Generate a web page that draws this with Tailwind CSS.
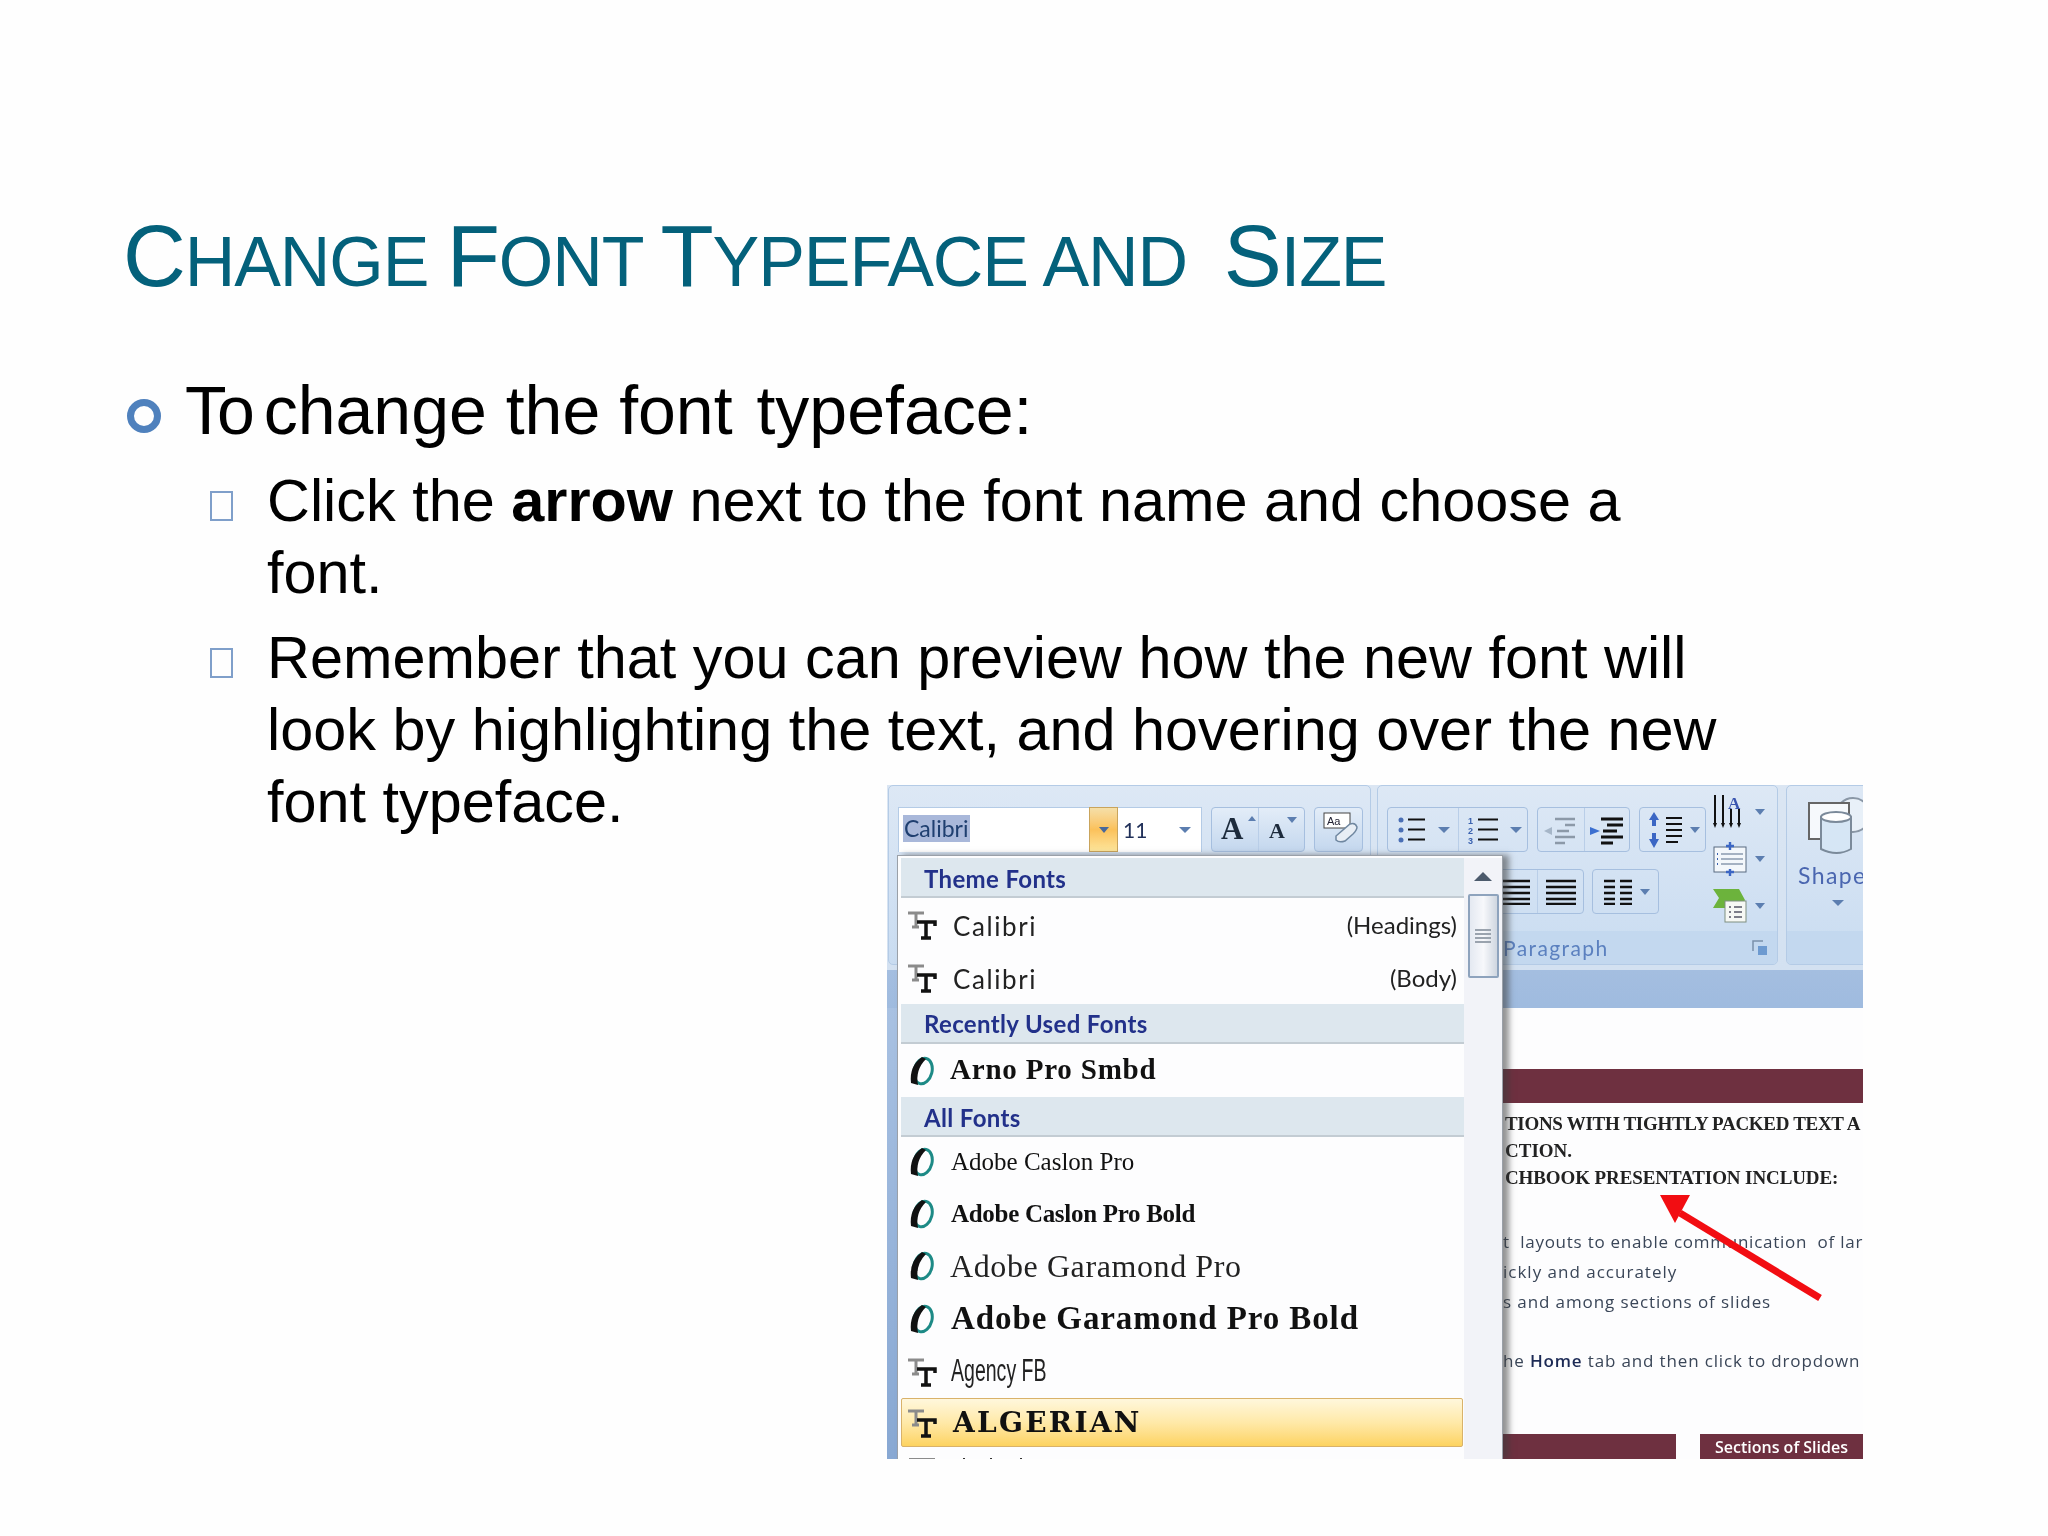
<!DOCTYPE html>
<html lang="en">
  <head>
    <meta charset="UTF-8" />
    <title>Change Font Typeface and Size</title>
    <script src="https://cdn.jsdelivr.net/npm/@tailwindcss/browser@4"></script>
  </head>
  <body class="bg-[#fefefe] font-['Liberation_Sans',Arial,sans-serif]">
    <div class="relative w-[2048px] h-[1536px] overflow-hidden">
      <!-- slide text -->
      <h1 class="absolute left-[123px] top-[206px] whitespace-pre text-[70px] leading-[100px] tracking-[-1.07px] text-[#04617b]"><span class="text-[87px]">C</span>HANGE <span class="text-[87px]">F</span>ONT <span class="text-[87px]">T</span>YPEFACE AND  <span class="text-[87px]">S</span>IZE</h1>

      <div class="absolute left-[127px] top-[372px] w-[1620px] text-black">
        <div class="flex items-start h-[76px]">
          <span class="mt-[27px] w-[34px] h-[34px] rounded-full border-[7px] border-[#4f81bd] shrink-0"></span>
          <p class="ml-[24px] text-[68px] leading-[76px] whitespace-pre"><span class="tracking-[-2px]">To</span><span class="ml-[-8px]"> change the font </span><span class="ml-[5px]">typeface:</span></p>
        </div>
        <div class="flex items-start mt-[17px] ml-[83px]">
          <span class="mt-[26px] w-[23px] h-[30px] border-2 border-[#7f9fca] shrink-0"></span>
          <p class="ml-[34px] text-[59.4px] leading-[72px] w-[1480px]">Click the <b>arrow</b> next to the font name and choose a<br />font.</p>
        </div>
        <div class="flex items-start mt-[13px] ml-[83px]">
          <span class="mt-[26px] w-[23px] h-[30px] border-2 border-[#7f9fca] shrink-0"></span>
          <p class="ml-[34px] text-[59.4px] leading-[72px] w-[1480px]">Remember that you can preview how the new font will<br />look by highlighting the text, and hovering over the new<br />font typeface.</p>
        </div>
      </div>

      <!-- word screenshot -->
      <div class="absolute left-[887px] top-[785px] w-[976px] h-[674px] overflow-hidden bg-white blur-[0.5px] font-['Open_Sans',sans-serif]">
        <!-- ribbon -->
        <div class="h-[185px] bg-gradient-to-b from-[#dbe6f3] to-[#d3e1f1] flex">
          <!-- font group -->
          <div class="w-[483px] h-[180px] ml-[1px] shrink-0 border border-[#b4cbe6] rounded-[5px] pt-[21px] pl-[9px] bg-gradient-to-b from-[#dde8f5] to-[#c9dcf1]">
            <div class="flex items-start">
              <div class="w-[191px] h-[45px] bg-white border-t border-l border-[#b4cbe6] pl-[4px] pt-[7px]">
                <span class="inline-block bg-[#a9b8da] text-[#1f3f70] text-[23px] leading-[27px] px-[1px] font-['Lato',sans-serif]">Calibri</span>
              </div>
              <div class="w-[29px] h-[45px] border border-[#c9a45c] bg-gradient-to-b from-[#f5dfa8] via-[#fbc15a] to-[#fde59a] flex items-center justify-center">
                <span class="border-x-[5px] border-t-[6px] border-x-transparent border-t-[#49689a]"></span>
              </div>
              <div class="w-[84px] h-[45px] bg-white border-t border-r border-[#b4cbe6] pl-[5px] pr-[10px] flex items-center justify-between">
                <span class="text-[21px] text-[#1f2f58] font-['Lato',sans-serif]">11</span>
                <span class="border-x-[6px] border-t-[6px] border-x-transparent border-t-[#5c7eb0]"></span>
              </div>
              <div class="ml-[9px] w-[94px] h-[45px] border border-[#a6bfdf] rounded-[4px] bg-gradient-to-b from-[#e3edf8] to-[#c4d7ee] flex font-['Liberation_Serif',serif] font-bold text-[#1d2b3c]">
                <div class="w-[47px] border-r border-[#b9cee8] relative pl-[9px]">
                  <span class="text-[31px] leading-[42px]">A</span>
                  <span class="absolute right-[2px] top-[8px] border-x-[4px] border-b-[5px] border-x-transparent border-b-[#5c7eb0]"></span>
                </div>
                <div class="flex-1 relative pl-[10px] pt-[6px]">
                  <span class="text-[22px] leading-[34px]">A</span>
                  <span class="absolute right-[7px] top-[9px] border-x-[5px] border-t-[6px] border-x-transparent border-t-[#5c7eb0]"></span>
                </div>
              </div>
              <div class="ml-[9px] w-[49px] h-[45px] border border-[#a6bfdf] rounded-[4px] bg-gradient-to-b from-[#e3edf8] to-[#c4d7ee]">
                <svg width="47" height="43" viewBox="0 0 47 43">
                  <rect x="9" y="5" width="26" height="15" fill="#fff" stroke="#444" />
                  <text x="12" y="17" font-size="11" font-family="Liberation Sans" fill="#223">Aa</text>
                  <path d="M21 28 L35 16 Q40 14 42 19 Q42 22 38 26 L30 33 Q24 35 21 32 Z" fill="#e8eef5" stroke="#6f87a0" stroke-width="1.5" />
                </svg>
              </div>
            </div>
          </div>

          <!-- paragraph group -->
          <div class="ml-[6px] w-[401px] h-[180px] shrink-0 border border-[#b4cbe6] rounded-[5px] bg-gradient-to-b from-[#dde8f5] to-[#c9dcf1] flex flex-col">
            <div class="flex-1 flex pl-[9px]">
              <div class="w-[320px] shrink-0">
                <div class="flex mt-[21px] gap-[9px]">
                  <div class="w-[141px] h-[45px] border border-[#a6bfdf] rounded-[4px] flex">
                    <div class="w-[71px] border-r border-[#b9cee8] flex items-center pl-[10px] gap-[12px]">
                      <svg width="28" height="30" viewBox="0 0 28 30">
                        <circle cx="3" cy="5" r="2.5" fill="#4a6fb5" /><circle cx="3" cy="15" r="2.5" fill="#4a6fb5" /><circle cx="3" cy="25" r="2.5" fill="#4a6fb5" />
                        <path d="M10 4.5H27M10 14.5H27M10 24.5H27" stroke="#111" stroke-width="2" />
                      </svg>
                      <span class="border-x-[6px] border-t-[6px] border-x-transparent border-t-[#5c7eb0]"></span>
                    </div>
                    <div class="flex-1 flex items-center pl-[9px] gap-[12px]">
                      <svg width="30" height="30" viewBox="0 0 30 30">
                        <text x="0" y="9" font-size="9" font-weight="700" font-family="Liberation Sans" fill="#3a62b0">1</text>
                        <text x="0" y="19" font-size="9" font-weight="700" font-family="Liberation Sans" fill="#3a62b0">2</text>
                        <text x="0" y="29" font-size="9" font-weight="700" font-family="Liberation Sans" fill="#3a62b0">3</text>
                        <path d="M10 4.5H30M10 14.5H30M10 24.5H30" stroke="#111" stroke-width="2" />
                      </svg>
                      <span class="border-x-[6px] border-t-[6px] border-x-transparent border-t-[#5c7eb0]"></span>
                    </div>
                  </div>
                  <div class="w-[93px] h-[45px] border border-[#a6bfdf] rounded-[4px] flex">
                    <div class="w-[47px] border-r border-[#b9cee8] flex items-center justify-center">
                      <svg width="36" height="34" viewBox="0 0 36 34">
                        <path d="M12 6H32M22 12H32M14 18H26M12 24H32M12 30H22" stroke="#8c99a8" stroke-width="2.5" />
                        <path d="M9 14 L1 18 L9 22 Z" fill="#a6b6c8" />
                      </svg>
                    </div>
                    <div class="flex-1 flex items-center justify-center">
                      <svg width="36" height="34" viewBox="0 0 36 34">
                        <path d="M12 6H34M18 12H34M14 18H28M12 24H34M12 30H24" stroke="#111" stroke-width="3" />
                        <path d="M1 14 L11 18 L1 22 Z" fill="#3b6fd0" />
                      </svg>
                    </div>
                  </div>
                  <div class="w-[67px] h-[45px] border border-[#a6bfdf] rounded-[4px] flex items-center pl-[8px] gap-[4px]">
                    <svg width="38" height="36" viewBox="0 0 38 36">
                      <path d="M6 0L11 8H8V14H4V8H1ZM6 36L11 27H8V21H4V27H1Z" fill="#3b66c4" />
                      <path d="M18 6H34M18 12H34M18 18H34M18 24H34M18 30H30" stroke="#111" stroke-width="2" />
                    </svg>
                    <span class="border-x-[5px] border-t-[6px] border-x-transparent border-t-[#5c7eb0]"></span>
                  </div>
                </div>
                <div class="flex justify-end mt-[17px] gap-[8px]">
                  <div class="w-[125px] h-[45px] border border-[#a6bfdf] rounded-[4px] flex justify-end">
                    <div class="w-[45px] border-r border-[#b9cee8] flex items-center justify-center">
                      <svg width="32" height="26" viewBox="0 0 32 26"><path d="M1 2H31M1 8H31M1 14H31M1 20H31M1 25H31" stroke="#111" stroke-width="2.4" /></svg>
                    </div>
                    <div class="w-[45px] flex items-center justify-center">
                      <svg width="32" height="26" viewBox="0 0 32 26"><path d="M1 2H31M1 8H31M1 14H31M1 20H31M1 25H31" stroke="#111" stroke-width="2.4" /></svg>
                    </div>
                  </div>
                  <div class="w-[67px] h-[45px] border border-[#a6bfdf] rounded-[4px] flex items-center pl-[10px] gap-[7px] mr-[48px]">
                    <svg width="30" height="26" viewBox="0 0 30 26"><path d="M1 2H12M1 8H12M1 14H12M1 20H12M1 25H12M17 2H29M17 8H29M17 14H29M17 20H29M17 25H29" stroke="#111" stroke-width="2.4" /></svg>
                    <span class="border-x-[5px] border-t-[6px] border-x-transparent border-t-[#5c7eb0]"></span>
                  </div>
                </div>
              </div>
              <div class="flex flex-col pt-[8px] gap-[11px] ml-[6px]">
                <div class="flex items-center gap-[8px] h-[36px]">
                  <svg width="34" height="34" viewBox="0 0 34 34">
                    <path d="M2 0V30M10 0V30M18 14V30M26 14V30" stroke="#111" stroke-width="2" />
                    <path d="M0 28H4L2 33ZM8 28H12L10 33ZM16 28H20L18 33ZM24 28H28L26 33Z" fill="#111" />
                    <text x="15" y="14" font-size="17" font-weight="700" font-family="Liberation Serif" fill="#3a55b0">A</text>
                  </svg>
                  <span class="border-x-[5px] border-t-[6px] border-x-transparent border-t-[#5c7eb0]"></span>
                </div>
                <div class="flex items-center gap-[8px] h-[36px]">
                  <svg width="34" height="34" viewBox="0 0 34 34">
                    <rect x="1" y="5" width="32" height="25" fill="#f3f7fb" stroke="#596a80" />
                    <path d="M4 12H5M4 17H5M4 22H5" stroke="#3a62b0" stroke-width="2" />
                    <path d="M8 12H30M8 17H30M8 22H30" stroke="#8a9bb0" stroke-width="1.5" />
                    <path d="M17 0V8M13 4H21M17 27V34M13 30H21" stroke="#3b66c4" stroke-width="2.4" />
                  </svg>
                  <span class="border-x-[5px] border-t-[6px] border-x-transparent border-t-[#5c7eb0]"></span>
                </div>
                <div class="flex items-center gap-[8px] h-[36px]">
                  <svg width="34" height="36" viewBox="0 0 34 36">
                    <path d="M0 1H26L32 12L28 20H0L6 10Z" fill="#6cb33c" />
                    <rect x="12" y="13" width="21" height="21" fill="#f6f8f4" stroke="#7f8f80" />
                    <path d="M16 19H18M16 24H18M16 29H18M21 19H29M21 24H29M21 29H29" stroke="#556" stroke-width="1.5" />
                  </svg>
                  <span class="border-x-[5px] border-t-[6px] border-x-transparent border-t-[#5c7eb0]"></span>
                </div>
              </div>
            </div>
            <div class="h-[33px] bg-[#c3d8ef] flex items-center justify-between pl-[125px] pr-[9px] rounded-b-[4px]">
              <span class="text-[21px] text-[#5b80bf] font-['Lato',sans-serif] tracking-[1.4px]">Paragraph</span>
              <svg width="16" height="16" viewBox="0 0 16 16"><path d="M1 11V1H11" fill="none" stroke="#7b90aa" stroke-width="1.5" /><rect x="6" y="6" width="9" height="9" fill="#6d9ad0" /></svg>
            </div>
          </div>

          <!-- shapes group -->
          <div class="ml-[8px] w-[100px] h-[180px] shrink-0 border border-[#b4cbe6] rounded-[5px] bg-gradient-to-b from-[#dde8f5] to-[#c9dcf1] flex flex-col">
            <div class="flex-1 flex flex-col pl-[11px] pt-[11px]">
              <svg class="ml-[9px]" width="62" height="60" viewBox="0 0 62 60">
                <circle cx="46" cy="18" r="17" fill="#e8f0f8" stroke="#8a97a6" stroke-width="2" />
                <rect x="2" y="6" width="40" height="36" fill="#f6f9fc" stroke="#666" stroke-width="2" />
                <path d="M14 20 Q32 12 44 20 V52 Q30 60 14 52Z" fill="#d6e6f5" stroke="#7b8a9a" stroke-width="2" />
                <ellipse cx="29" cy="20" rx="15" ry="5" fill="#fff" stroke="#7b8a9a" stroke-width="2" />
              </svg>
              <span class="mt-[3px] text-[23px] leading-[30px] tracking-[1.4px] text-[#4a66b0] font-['Lato',sans-serif] whitespace-nowrap">Shapes</span>
              <span class="ml-[34px] mt-[10px] w-0 border-x-[6px] border-t-[6px] border-x-transparent border-t-[#5c7eb0]"></span>
            </div>
            <div class="h-[33px] bg-[#c3d8ef] rounded-b-[4px]"></div>
          </div>
        </div>
        <div class="h-[38px] bg-gradient-to-b from-[#a4bee0] to-[#9fbbdf]"></div>

        <!-- document behind the menu -->
        <div class="flex h-[451px]">
          <div class="w-[10px] bg-gradient-to-b from-[#a8c1e2] to-[#88a8d3]"></div>
          <div class="ml-[606px] flex-1 overflow-hidden bg-[#fdfdfe] text-[#222]">
            <div class="mt-[61px] h-[34px] bg-[#6e3040]"></div>
            <p class="mt-[8px] pl-[2px] h-[26px] leading-[26px] text-[19px] font-bold whitespace-nowrap tracking-[-0.3px] font-['Liberation_Serif',serif]">TIONS WITH TIGHTLY PACKED TEXT A</p>
            <p class="h-[27px] leading-[27px] pl-[2px] text-[19px] font-bold whitespace-nowrap font-['Liberation_Serif',serif]">CTION.</p>
            <p class="h-[28px] leading-[28px] pl-[2px] text-[19px] font-bold whitespace-nowrap tracking-[-0.1px] font-['Liberation_Serif',serif]">CHBOOK PRESENTATION INCLUDE:</p>
            <p class="mt-[34px] h-[31px] leading-[31px] text-[17px] whitespace-nowrap tracking-[0.75px] text-[#3a4658]">t&nbsp; layouts to enable communication&nbsp; of lar</p>
            <p class="h-[30px] leading-[30px] text-[17px] whitespace-nowrap tracking-[1px] text-[#3a4658]">ickly and accurately</p>
            <p class="h-[30px] leading-[30px] text-[17px] whitespace-nowrap tracking-[0.9px] text-[#3a4658]">s and among sections of slides</p>
            <p class="mt-[29px] h-[30px] leading-[30px] text-[17px] whitespace-nowrap tracking-[0.85px] text-[#3a4658]">he <span class="font-semibold text-[#1c2a55]">Home</span> tab and then click to dropdown</p>
            <div class="mt-[58px] h-[27px] flex gap-[24px]">
              <div class="w-[173px] bg-[#6e3040]"></div>
              <div class="flex-1 bg-[#6e3040] text-white text-[16px] font-semibold leading-[27px] text-center whitespace-nowrap">Sections of Slides</div>
            </div>
          </div>
        </div>

        <!-- annotation arrow -->
        <svg class="absolute left-[760px] top-[398px]" width="190" height="130" viewBox="0 0 190 130">
          <path d="M173 115 L33 30" stroke="#f20d12" stroke-width="7" />
          <path d="M13 12 L43 12 L28 40 Z" fill="#f20d12" />
        </svg>

        <!-- font dropdown -->
        <div class="absolute left-[10px] top-[70px] w-[606px] h-[604px] bg-[#fdfdfe] border border-[#9aa0a8] border-b-0 shadow-[6px_0_6px_rgba(60,60,60,0.55)] flex pt-[2px] overflow-hidden">
          <div class="w-[566px] pl-[3px] font-['Lato',sans-serif]">
            <div class="h-[40px] bg-[#dde7ee] border-b-2 border-[#c3ccd3] pl-[23px] text-[24px] font-bold leading-[41px] tracking-[0.35px] text-[#22318a]">Theme Fonts</div>
            <div class="h-[53px] flex items-center pl-[6px] text-[26px] text-[#222]">
              <svg width="30" height="30" viewBox="0 0 30 30"><path d="M1 3H17M9 3V17M5 17H12" fill="none" stroke="#8b8b8b" stroke-width="3" /><path d="M10 12H28V16M19 12V28M14 28H24" fill="none" stroke="#111" stroke-width="3.5" /></svg>
              <span class="ml-[16px] mt-[3px] tracking-[1.6px]">Calibri</span>
              <span class="ml-auto mr-[7px] text-[24px]">(Headings)</span>
            </div>
            <div class="h-[53px] flex items-center pl-[6px] text-[26px] text-[#222]">
              <svg width="30" height="30" viewBox="0 0 30 30"><path d="M1 3H17M9 3V17M5 17H12" fill="none" stroke="#8b8b8b" stroke-width="3" /><path d="M10 12H28V16M19 12V28M14 28H24" fill="none" stroke="#111" stroke-width="3.5" /></svg>
              <span class="ml-[16px] mt-[3px] tracking-[1.6px]">Calibri</span>
              <span class="ml-auto mr-[7px] text-[24px]">(Body)</span>
            </div>
            <div class="h-[40px] bg-[#dde7ee] border-b-2 border-[#c3ccd3] pl-[23px] text-[24px] font-bold leading-[40px] tracking-[0.35px] text-[#22318a]">Recently Used Fonts</div>
            <div class="h-[53px] flex items-center pl-[6px] font-['Liberation_Serif',serif] font-bold text-[29px] text-[#111]">
              <svg width="30" height="30" viewBox="0 0 30 30"><ellipse cx="16" cy="15" rx="9" ry="13" transform="rotate(14 16 15)" fill="none" stroke="#1d8a86" stroke-width="3" /><path d="M15 1 Q2 10 4 27 L11 29 Q8 14 19 3Z" fill="#111" /></svg>
              <span class="ml-[13px] mb-[2px] tracking-[0.8px]">Arno Pro Smbd</span>
            </div>
            <div class="h-[40px] bg-[#dde7ee] border-b-2 border-[#c3ccd3] pl-[23px] text-[24px] font-bold leading-[41px] tracking-[0.35px] text-[#22318a]">All Fonts</div>
            <div class="h-[50px] flex items-center pl-[6px] font-['Liberation_Serif',serif] text-[25px] text-[#111]">
              <svg width="30" height="30" viewBox="0 0 30 30"><ellipse cx="16" cy="15" rx="9" ry="13" transform="rotate(14 16 15)" fill="none" stroke="#1d8a86" stroke-width="3" /><path d="M15 1 Q2 10 4 27 L11 29 Q8 14 19 3Z" fill="#111" /></svg>
              <span class="ml-[14px]">Adobe Caslon Pro</span>
            </div>
            <div class="h-[53px] flex items-center pl-[6px] font-['Liberation_Serif',serif] font-bold text-[25px] text-[#111]">
              <svg width="30" height="30" viewBox="0 0 30 30"><ellipse cx="16" cy="15" rx="9" ry="13" transform="rotate(14 16 15)" fill="none" stroke="#1d8a86" stroke-width="3" /><path d="M15 1 Q2 10 4 27 L11 29 Q8 14 19 3Z" fill="#111" /></svg>
              <span class="ml-[14px] tracking-[-0.3px]">Adobe Caslon Pro Bold</span>
            </div>
            <div class="h-[52px] flex items-center pl-[6px] font-['Liberation_Serif',serif] text-[32px] text-[#222]">
              <svg width="30" height="30" viewBox="0 0 30 30"><ellipse cx="16" cy="15" rx="9" ry="13" transform="rotate(14 16 15)" fill="none" stroke="#1d8a86" stroke-width="3" /><path d="M15 1 Q2 10 4 27 L11 29 Q8 14 19 3Z" fill="#111" /></svg>
              <span class="ml-[13px] tracking-[0.6px]">Adobe Garamond Pro</span>
            </div>
            <div class="h-[53px] flex items-center pl-[6px] font-['Liberation_Serif',serif] font-bold text-[33px] text-[#111]">
              <svg width="30" height="30" viewBox="0 0 30 30"><ellipse cx="16" cy="15" rx="9" ry="13" transform="rotate(14 16 15)" fill="none" stroke="#1d8a86" stroke-width="3" /><path d="M15 1 Q2 10 4 27 L11 29 Q8 14 19 3Z" fill="#111" /></svg>
              <span class="ml-[14px] tracking-[0.9px]">Adobe Garamond Pro Bold</span>
            </div>
            <div class="h-[53px] flex items-center pl-[6px] font-['Liberation_Sans',sans-serif] text-[31px] text-[#222]">
              <svg width="30" height="30" viewBox="0 0 30 30"><path d="M1 3H17M9 3V17M5 17H12" fill="none" stroke="#8b8b8b" stroke-width="3" /><path d="M10 12H28V16M19 12V28M14 28H24" fill="none" stroke="#111" stroke-width="3.5" /></svg>
              <span class="ml-[14px] scale-x-[.63] origin-left whitespace-nowrap">Agency FB</span>
            </div>
            <div class="h-[49px] w-[562px] flex items-center pl-[5px] font-['DejaVu_Serif',serif] font-bold text-[28px] text-[#111] border border-[#d9b26a] rounded-[2px] bg-gradient-to-b from-[#fff7dc] via-[#ffe9a8] to-[#fdd35f]">
              <svg width="30" height="30" viewBox="0 0 30 30"><path d="M1 3H17M9 3V17M5 17H12" fill="none" stroke="#8b8b8b" stroke-width="3" /><path d="M10 12H28V16M19 12V28M14 28H24" fill="none" stroke="#111" stroke-width="3.5" /></svg>
              <span class="ml-[16px] tracking-[2.3px]">ALGERIAN</span>
            </div>
            <!-- top of the next row, cut by the screenshot's edge -->
            <svg class="ml-[6px] mt-[11px]" width="130" height="4" viewBox="0 0 130 4">
              <path d="M2 1H28" stroke="#8b8b8b" stroke-width="2" />
              <path d="M56 1H58M83 1H85M113 1H115" stroke="#333" stroke-width="2" />
            </svg>
          </div>
          <!-- scrollbar -->
          <div class="flex-1 bg-[#f2f3f8] flex flex-col items-center">
            <span class="mt-[14px] border-x-[9px] border-b-[9px] border-x-transparent border-b-[#4c5a6c]"></span>
            <div class="mt-[13px] w-[31px] h-[84px] border-2 border-[#8ea3bd] rounded-[2px] bg-gradient-to-r from-[#e4e9f1] via-[#f7f8fb] to-[#cfd6e0] flex flex-col items-center justify-center gap-[2px]">
              <span class="w-[16px] h-[2px] bg-[#9aa3ae]"></span>
              <span class="w-[16px] h-[2px] bg-[#9aa3ae]"></span>
              <span class="w-[16px] h-[2px] bg-[#9aa3ae]"></span>
              <span class="w-[16px] h-[2px] bg-[#9aa3ae]"></span>
            </div>
          </div>
        </div>
      </div>
    </div>
  </body>
</html>
